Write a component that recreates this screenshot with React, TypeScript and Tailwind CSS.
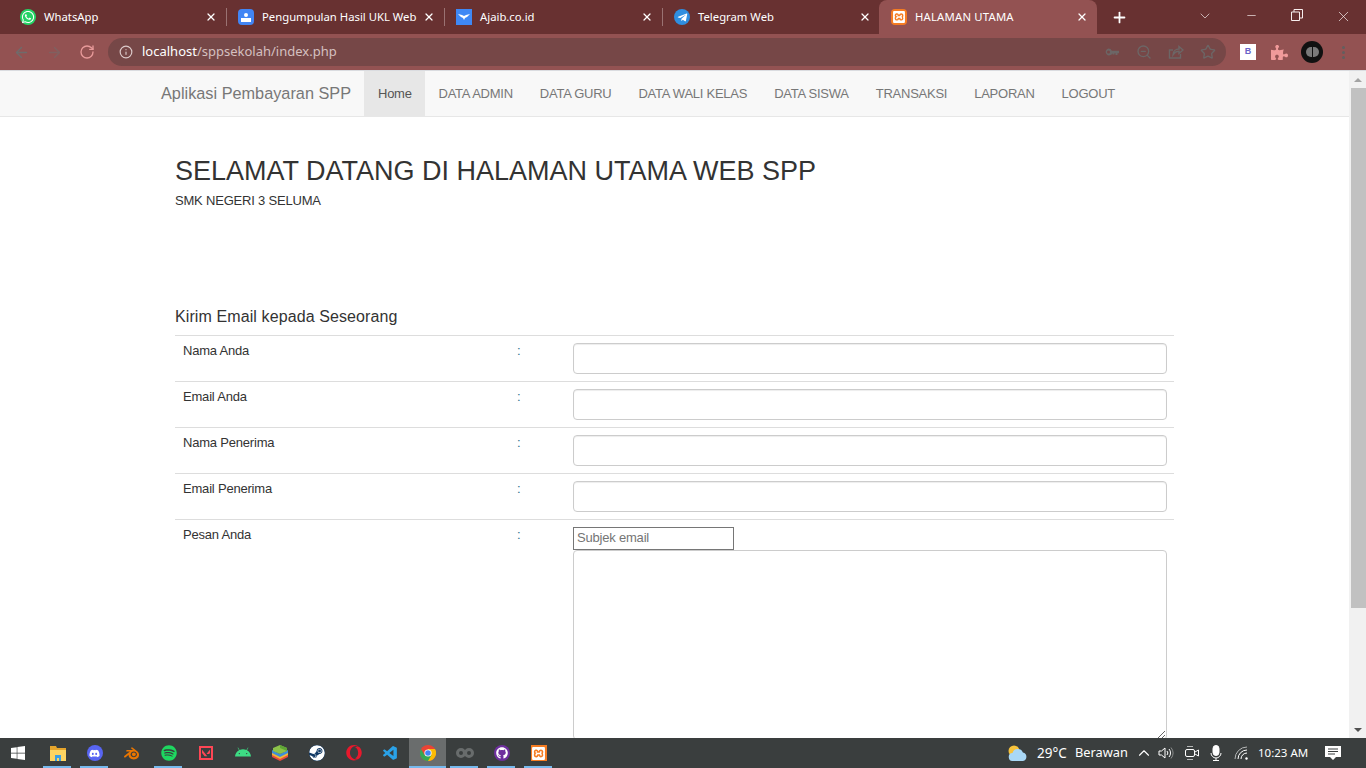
import React from 'react'
import { ArrowLeft, ArrowRight, RotateCw, Info, ZoomOut, Star, ChevronDown, ChevronUp, Minus, X, Plus } from 'lucide-react'
import { FaWhatsapp, FaTelegramPlane, FaDiscord, FaSpotify, FaSteam, FaOpera, FaGithub, FaAndroid, FaWindows, FaPuzzlePiece } from 'react-icons/fa'
import { SiBlender, SiValorant, SiXampp } from 'react-icons/si'
import { VscVscode } from 'react-icons/vsc'

const tabs = [
  { title: 'WhatsApp', icon: <span className="w-4 h-4 rounded-full bg-[#25d366] flex items-center justify-center"><FaWhatsapp className="text-white" size={14} /></span> },
  { title: 'Pengumpulan Hasil UKL Web', icon: <span className="w-4 h-4 rounded-sm bg-[#4285f4] flex flex-col items-center justify-center"><span className="w-1 h-1 rounded-full bg-white" /><span className="w-2.5 h-1 bg-white mt-px" /></span> },
  { title: 'Ajaib.co.id', icon: <span className="w-4 h-4 bg-[#3f88f5] flex items-center justify-center"><svg width="12" height="8" viewBox="0 0 12 8"><path d="M0 1l4 1 2 1 2-1 4-1-3 3-2 1-1 2-1-2-2-1z" fill="#fff" /></svg></span> },
  { title: 'Telegram Web', icon: <span className="w-4 h-4 rounded-full bg-[#2f8ee0] flex items-center justify-center"><FaTelegramPlane className="text-white" size={11} /></span> },
  { title: 'HALAMAN UTAMA', icon: <span className="w-4 h-4 rounded-sm bg-[#f57c22] flex items-center justify-center"><SiXampp className="text-white" size={12} /></span>, active: true },
]

const navItems = ['DATA ADMIN', 'DATA GURU', 'DATA WALI KELAS', 'DATA SISWA', 'TRANSAKSI', 'LAPORAN', 'LOGOUT']
const formRows = ['Nama Anda', 'Email Anda', 'Nama Penerima', 'Email Penerima']

const BlueStacks = () => (
  <svg width="18" height="18" viewBox="0 0 18 18">
    <path d="M1 10l8 4 8-4v3l-8 4-8-4z" fill="#e8483f" />
    <path d="M1 8l8 4 8-4v3l-8 4-8-4z" fill="#f2b632" />
    <path d="M1 6l8 4 8-4v3l-8 4-8-4z" fill="#3d8fd9" />
    <path d="M2 4l7-3 7 3v3l-7 3-7-3z" fill="#8bc34a" />
    <path d="M9 1l7 3v3l-7-3z" fill="#5ea636" />
  </svg>
)

const Chrome = () => (
  <svg width="16" height="16" viewBox="0 0 16 16">
    <circle cx="8" cy="8" r="8" fill="#ea4335" />
    <path d="M8 16a8 8 0 0 0 7-12H8z" fill="#fbbc05" />
    <path d="M1 4a8 8 0 0 0 7 12l3.500-6H4.500z" fill="#34a853" />
    <circle cx="8" cy="8" r="3.600" fill="#fff" />
    <circle cx="8" cy="8" r="2.800" fill="#4285f4" />
  </svg>
)

const Explorer = () => (
  <svg width="16" height="15" viewBox="0 0 16 15">
    <path d="M0 0h6l1 2h9v3H0z" fill="#e5a52c" />
    <path d="M0 4h16v11H0z" fill="#fcd462" />
    <path d="M5 9h6v6H9v-3H7v3H5z" fill="#3a9ee4" />
  </svg>
)

const Weather = () => (
  <svg width="21" height="16" viewBox="0 0 21 16">
    <circle cx="7" cy="6" r="5.500" fill="#f7c33c" />
    <path d="M6 16a4 4 0 0 1-.5-8 5.500 5.500 0 0 1 10.400-.6A4.400 4.400 0 0 1 16 16z" fill="#a9d8f7" />
  </svg>
)

const Wattpad = () => (
  <svg width="18" height="12" viewBox="0 0 18 12" fill="none" stroke="#686c6c" strokeWidth="3">
    <circle cx="5" cy="6" r="3.500" />
    <circle cx="13" cy="6" r="3.500" />
  </svg>
)

const KeyIcon = () => (
  <svg width="16" height="16" viewBox="0 0 16 16" fill="currentColor">
    <path d="M4.500 4.500a3.500 3.500 0 0 1 3.300 2.300H15v2.400h-1.500V11h-2V9.200h-1v1.300h-2V9.200A3.500 3.500 0 1 1 4.500 4.500zm0 2a1.500 1.500 0 1 0 0 3 1.500 1.500 0 0 0 0-3z" />
  </svg>
)

const ShareIcon = () => (
  <svg width="16" height="16" viewBox="0 0 16 16" fill="none" stroke="currentColor" strokeWidth="1.400">
    <path d="M12.500 10v4h-11V6H5" />
    <path d="M5 11c0-4 3-6 6-6V2.500L15 6l-4 3.500V7.300C8.500 7.300 6.500 8.500 5 11z" />
  </svg>
)

const Speaker = () => (
  <svg width="16" height="16" viewBox="0 0 16 16" fill="none" stroke="currentColor" strokeWidth="1">
    <path d="M1 6h2.500L7 3v10l-3.500-3H1z" />
    <path d="M9 6a3 3 0 0 1 0 4M11 4a6 6 0 0 1 0 8" />
    <path d="M13 2.500a9 9 0 0 1 0 11" stroke="#8a8d8d" />
  </svg>
)

const Camera = () => (
  <svg width="16" height="16" viewBox="0 0 16 16" fill="none" stroke="currentColor" strokeWidth="1">
    <path d="M3 1.500h6M3 14.500h6" stroke="#b5b7b7" />
    <rect x="1.500" y="4.500" width="9" height="7" rx="1.500" />
    <path d="M11 7l3.500-2v6L11 9" />
  </svg>
)

const MicIcon = () => (
  <svg width="16" height="16" viewBox="0 0 16 16" fill="none" stroke="currentColor">
    <rect x="5" y="0.500" width="6" height="10" rx="3" fill="currentColor" />
    <path d="M3 8a5 5 0 0 0 10 0M8 13v2M5 15.500h6" />
  </svg>
)

const WifiIcon = () => (
  <svg width="16" height="14" viewBox="0 0 16 14" fill="none" stroke="currentColor">
    <path d="M1 13A12 12 0 0 1 13 1" stroke="#b5b7b7" />
    <path d="M4 13a9 9 0 0 1 9-9M7 13a6 6 0 0 1 6-6" />
    <circle cx="12.500" cy="12.500" r="1.200" fill="currentColor" stroke="none" />
  </svg>
)

const Notif = () => (
  <svg width="16" height="16" viewBox="0 0 16 16">
    <path d="M0 1h16v11h-5l-3 3-3-3H0z" fill="#fff" />
    <path d="M3 4h10M3 6.500h10M3 9h7" stroke="#3a3e3e" />
  </svg>
)

const taskIcons = [
  { key: 'explorer', node: <Explorer />, running: true },
  { key: 'discord', node: <span className="w-4 h-4 rounded-full bg-[#5865f2] flex items-center justify-center"><FaDiscord className="text-white" size={11} /></span>, running: true },
  { key: 'blender', node: <SiBlender className="text-[#ea7600]" size={15} /> },
  { key: 'spotify', node: <FaSpotify className="text-[#1ed760]" size={16} />, running: true },
  { key: 'valorant', node: <span className="w-3.5 h-3.5 border-2 border-[#ff4655] flex items-center justify-center"><SiValorant className="text-[#ff4655]" size={8} /></span> },
  { key: 'android', node: <FaAndroid className="text-[#3ddc84]" size={16} /> },
  { key: 'bluestacks', node: <BlueStacks /> },
  { key: 'steam', node: <FaSteam className="text-white bg-[#123a66] rounded-full" size={16} /> },
  { key: 'opera', node: <FaOpera className="text-[#e8182c]" size={16} /> },
  { key: 'vscode', node: <VscVscode className="text-[#2aa2e8]" size={17} /> },
  { key: 'chrome', node: <Chrome />, running: true, active: true },
  { key: 'wattpad', node: <Wattpad />, running: true },
  { key: 'github', node: <span className="w-4 h-4 rounded-full bg-[#6e2f9e] flex items-center justify-center"><FaGithub className="text-white" size={12} /></span>, running: true },
  { key: 'xampp', node: <span className="w-4 h-4 bg-[#f57c22] flex items-center justify-center"><SiXampp className="text-white" size={13} /></span>, running: true },
]

export default function App() {
  return (
    <div className="h-[768px] w-[1366px] overflow-hidden flex flex-col font-['Liberation_Sans',sans-serif] bg-white">
      {/* tab strip */}
      <div className="h-[34px] bg-[#683131] flex pl-2 text-white font-['Noto_Sans',sans-serif] text-[11.300px] shrink-0">
        {tabs.map((tab) => (
          <div key={tab.title} className={`w-[218px] h-[34px] flex items-center pl-3 relative ${tab.active ? 'bg-[#935252] rounded-t-lg -ml-px tracking-[0.2px]' : ''}`}>
            <span className="w-4 h-4 flex items-center justify-center">{tab.icon}</span>
            <span className="ml-2 whitespace-nowrap">{tab.title}</span>
            <X className="absolute left-[197px] top-[11px]" size={12} strokeWidth={2.5} />
            {!tab.active && tab.title !== 'Telegram Web' && <span className="absolute right-[-1px] top-[8px] w-px h-[18px] bg-[#9a7272]" />}
          </div>
        ))}
        <div className="w-[45px] flex items-center justify-center"><Plus size={17} strokeWidth={2.5} /></div>
        <div className="flex-1" />
        <div className="flex items-start pt-2 text-[#f7eeee]">
          <div className="w-[46px] flex justify-center"><ChevronDown size={16} strokeWidth={1} /></div>
          <div className="w-[46px] flex justify-center"><Minus size={13} strokeWidth={1.25} className="mt-px" /></div>
          <div className="w-[46px] flex justify-center pt-px">
            <svg width="12" height="12" viewBox="0 0 12 12" fill="none" stroke="currentColor"><path d="M.5 3h8v8.500h-8zM3 3V.5h8.500V9H8.500" /></svg>
          </div>
          <div className="w-[46px] flex justify-center"><X size={17} strokeWidth={1} /></div>
        </div>
      </div>

      {/* toolbar */}
      <div className="h-[36px] bg-[#935252] flex items-center shrink-0">
        <div className="flex items-center w-[108px] pl-[13px] gap-[16px]">
          <ArrowLeft size={17} className="text-[#6f6b6b]" />
          <ArrowRight size={17} className="text-[#806060]" />
          <RotateCw size={16} className="text-[#e89a9a]" />
        </div>
        <div className="w-[1118px] h-[28px] rounded-full bg-[#764747] flex items-center pl-[11px] pr-[10px]">
          <Info size={14} className="text-[#dccaca]" />
          <span className="ml-[9px] text-[13px] font-['Noto_Sans',sans-serif] text-[#d5c0c0]"><span className="text-white">localhost</span>/sppsekolah/index.php</span>
          <div className="flex-1" />
          <div className="flex items-center gap-[16px] text-[#6c6666]">
            <KeyIcon />
            <ZoomOut size={16} />
            <ShareIcon />
            <Star size={16} />
          </div>
        </div>
        <div className="flex items-center flex-1 pl-[14px]">
          <span className="w-4 h-4 bg-white text-[#6a63c9] text-[9px] font-bold flex items-center justify-center">B</span>
          <FaPuzzlePiece size={17} className="ml-[15px] text-[#f09a9a]" />
          <span className="ml-[13px] w-[22px] h-[22px] rounded-full bg-[#111] flex items-center justify-center gap-px">
            <span className="w-[6px] h-[10px] rounded-l-full bg-[#7a7a7a]" />
            <span className="w-[6px] h-[10px] rounded-r-full bg-[#7a7a7a]" />
          </span>
          <span className="ml-[19px] flex flex-col gap-[2px]">
            <span className="w-[3px] h-[3px] rounded-full bg-[#625f5f]" />
            <span className="w-[3px] h-[3px] rounded-full bg-[#625f5f]" />
            <span className="w-[3px] h-[3px] rounded-full bg-[#625f5f]" />
          </span>
        </div>
      </div>

      {/* page */}
      <div className="flex h-[668px] shrink-0 overflow-hidden border-t border-[#dadce0]">
        <div className="w-[1349px] overflow-hidden">
          <nav className="h-[46px] bg-[#f8f8f8] border-b border-[#e7e7e7] flex pl-[161px] text-[13px] tracking-[-0.25px] text-[#777]">
            <span className="text-[16.300px] tracking-normal leading-[45px] w-[203px] whitespace-nowrap">Aplikasi Pembayaran SPP</span>
            <span className="w-[61px] pl-[14px] leading-[45px] bg-[#e7e7e7] text-[#555]">Home</span>
            {navItems.map((item) => (
              <span key={item} className="px-[13.500px] leading-[45px] whitespace-nowrap">{item}</span>
            ))}
          </nav>

          <div className="w-[999px] ml-[175px]">
            <h1 className="text-[27px] leading-[31px] text-[#333] mt-[39px]">SELAMAT DATANG DI HALAMAN UTAMA WEB SPP</h1>
            <p className="text-[13px] tracking-[-0.2px] leading-[20px] text-[#333] mt-[4px]">SMK NEGERI 3 SELUMA</p>
            <h2 className="text-[16px] tracking-[0.1px] leading-[18px] text-[#333] mt-[97px] mb-[9px]">Kirim Email kepada Seseorang</h2>

            {formRows.map((label) => (
              <div key={label} className="grid grid-cols-[334px_56px_609px] border-t border-[#ddd] h-[46px] text-[13px] tracking-[-0.2px] text-[#333]">
                <div className="pl-2 pt-[5px] leading-[20px]">{label}</div>
                <div className="pl-2 pt-[5px] leading-[20px] text-[#31708f]">:</div>
                <div className="pl-2 pr-[7px] pt-[7px]">
                  <input type="text" className="w-full h-[31px] bg-white border border-[#ccc] rounded px-3 shadow-[inset_0_1px_1px_rgba(0,0,0,0.075)]" />
                </div>
              </div>
            ))}
            <div className="grid grid-cols-[334px_56px_609px] border-t border-[#ddd] text-[13px] tracking-[-0.2px] text-[#333]">
              <div className="pl-2 pt-[5px] leading-[20px]">Pesan Anda</div>
              <div className="pl-2 pt-[5px] leading-[20px] text-[#31708f]">:</div>
              <div className="pl-2 pr-[7px] pt-[7px] flex flex-col">
                <input type="text" placeholder="Subjek email" className="w-[161px] h-[23px] border border-[#767676] px-[3px] pb-[2px] text-[13px] tracking-[-0.2px] placeholder:text-[#757575]" />
                <textarea className="w-full h-[190px] bg-white border border-[#ccc] rounded" />
              </div>
            </div>
          </div>
        </div>

        {/* scrollbar */}
        <div className="w-[17px] bg-[#f1f1f1] flex flex-col">
          <div className="h-[17px] flex items-center justify-center"><span className="border-x-[4px] border-x-transparent border-b-[4px] border-b-[#a3a3a3]" /></div>
          <div className="h-[520px] ml-[2px] bg-[#c1c1c1]" />
          <div className="flex-1" />
          <div className="h-[17px] flex items-center justify-center"><span className="border-x-[4px] border-x-transparent border-t-[4px] border-t-[#505050]" /></div>
        </div>
      </div>

      {/* taskbar */}
      <div className="h-[30px] bg-[#3a3e3e] flex items-center shrink-0 text-white font-['Noto_Sans',sans-serif]">
        <div className="w-[39px] flex justify-center pr-1"><FaWindows size={16} /></div>
        {taskIcons.map((t) => (
          <div key={t.key} className={`w-[37px] h-[30px] flex items-center justify-center relative ${t.active ? 'bg-[#6a6d6d]' : ''}`}>
            {t.node}
            {t.running && <span className={`absolute bottom-0 h-[2px] bg-[#76b9ed] ${t.active ? 'left-0 right-0' : 'left-1 right-[5px]'}`} />}
          </div>
        ))}
        <div className="flex-1" />
        <Weather />
        <span className="ml-[9px] text-[13.500px] w-[29px] whitespace-nowrap">29°C</span>
        <span className="ml-[9px] text-[12.800px] w-[52px] whitespace-nowrap">Berawan</span>
        <ChevronUp size={18} strokeWidth={1.5} className="ml-[8px]" />
        <span className="ml-[5px]"><Speaker /></span>
        <span className="ml-[10px]"><Camera /></span>
        <span className="ml-[8px]"><MicIcon /></span>
        <span className="ml-[10px]"><WifiIcon /></span>
        <span className="ml-[8px] text-[11.500px] w-[49px] whitespace-nowrap">10:23 AM</span>
        <span className="ml-[18px] mr-[25px]"><Notif /></span>
      </div>
    </div>
  )
}
